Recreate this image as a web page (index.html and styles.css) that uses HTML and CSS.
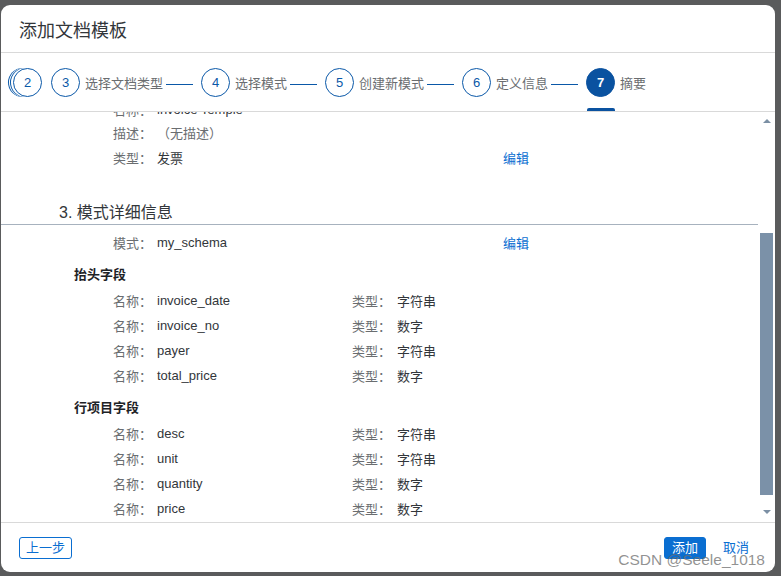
FILE: index.html
```html
<!DOCTYPE html>
<html lang="zh">
<head>
<meta charset="utf-8">
<title>添加文档模板</title>
<link rel="stylesheet" href="styles.css">
</head>
<body>
<div class="dialog">
  <header class="dlg-header">添加文档模板</header>

  <nav class="stepper">
    <div class="step"><span class="circle stacked">2</span></div>
    <div class="step"><span class="circle">3</span><span class="step-label">选择文档类型</span></div>
    <span class="connector"></span>
    <div class="step"><span class="circle">4</span><span class="step-label">选择模式</span></div>
    <span class="connector"></span>
    <div class="step"><span class="circle">5</span><span class="step-label">创建新模式</span></div>
    <span class="connector"></span>
    <div class="step"><span class="circle">6</span><span class="step-label">定义信息</span></div>
    <span class="connector"></span>
    <div class="step current"><span class="circle filled">7</span><span class="step-label">摘要</span></div>
  </nav>

  <div class="body">
    <div class="main">
      <div class="scroll-inner">
        <div class="attr-row top"><span class="lbl">名称：</span><span class="val">invoice Temple</span></div>
        <div class="attr-row"><span class="lbl">描述：</span><span class="val muted">（无描述）</span></div>
        <div class="attr-row"><span class="lbl">类型：</span><span class="val">发票</span><a class="edit">编辑</a></div>

        <h2 class="section-title">3. 模式详细信息</h2>

        <div class="attr-row first"><span class="lbl">模式：</span><span class="val">my_schema</span><a class="edit">编辑</a></div>

        <h3 class="sub-title">抬头字段</h3>
        <div class="field-list">
          <div class="field-row"><span class="lbl">名称：</span><span class="val">invoice_date</span><span class="lbl">类型：</span><span class="val">字符串</span></div>
          <div class="field-row"><span class="lbl">名称：</span><span class="val">invoice_no</span><span class="lbl">类型：</span><span class="val">数字</span></div>
          <div class="field-row"><span class="lbl">名称：</span><span class="val">payer</span><span class="lbl">类型：</span><span class="val">字符串</span></div>
          <div class="field-row"><span class="lbl">名称：</span><span class="val">total_price</span><span class="lbl">类型：</span><span class="val">数字</span></div>
        </div>

        <h3 class="sub-title">行项目字段</h3>
        <div class="field-list">
          <div class="field-row"><span class="lbl">名称：</span><span class="val">desc</span><span class="lbl">类型：</span><span class="val">字符串</span></div>
          <div class="field-row"><span class="lbl">名称：</span><span class="val">unit</span><span class="lbl">类型：</span><span class="val">字符串</span></div>
          <div class="field-row"><span class="lbl">名称：</span><span class="val">quantity</span><span class="lbl">类型：</span><span class="val">数字</span></div>
          <div class="field-row"><span class="lbl">名称：</span><span class="val">price</span><span class="lbl">类型：</span><span class="val">数字</span></div>
        </div>
      </div>
    </div>
    <div class="scrollbar">
      <span class="arrow up"></span>
      <span class="thumb"></span>
      <span class="arrow down"></span>
    </div>
  </div>

  <footer class="dlg-footer">
    <button class="btn btn-outline">上一步</button>
    <div class="footer-right">
      <button class="btn btn-primary">添加</button>
      <button class="btn btn-ghost">取消</button>
    </div>
    <span class="watermark">CSDN @Seele_1018</span>
  </footer>
</div>
</body>
</html>
```

FILE: styles.css
```css
* { box-sizing: border-box; }

html, body {
  margin: 0;
  padding: 0;
}

body {
  width: 781px;
  height: 576px;
  background: #5a5b5c;
  font-family: "Liberation Sans", "Noto Sans CJK SC", sans-serif;
  font-size: 13px;
  color: #32363a;
  overflow: hidden;
}

.dialog {
  position: relative;
  margin: 5px 0 0 1px;
  width: 774px;
  height: 567px;
  background: #fff;
  border-radius: 9px;
  display: flex;
  flex-direction: column;
  overflow: hidden;
}

.dlg-header {
  height: 48px;
  flex: none;
  padding: 0 18px;
  display: flex;
  align-items: center;
  font-size: 18px;
  color: #32363a;
  border-bottom: 1px solid #d9d9d9;
}

/* ---------- stepper ---------- */
.stepper {
  height: 59px;
  flex: none;
  display: flex;
  align-items: stretch;
  padding-left: 12px;
  border-bottom: 1px solid #d9d9d9;
}

.step {
  position: relative;
  display: flex;
  align-items: center;
  gap: 5px;
}

.step + .step { margin-left: 9px; }

.circle {
  width: 29px;
  height: 29px;
  border-radius: 50%;
  border: 1px solid #0a58a8;
  background: #fff;
  color: #0a58a8;
  display: flex;
  align-items: center;
  justify-content: center;
  font-size: 13px;
  margin-top: 1px;
}

.circle.stacked {
  box-shadow: -2px 0 0 #fff, -3px 0 0 #0a58a8, -4px 0 0 #fff, -5px 0 0 #0a58a8;
}

.circle.filled {
  background: #0a52a0;
  border-color: #0a52a0;
  color: #fff;
  font-weight: bold;
}

.step-label {
  color: #6a6d70;
  font-size: 13px;
  margin-top: 1px;
  white-space: nowrap;
}

.connector {
  align-self: center;
  width: 27px;
  height: 1px;
  background: #0a58a8;
  margin: 4px 8px 0 3px;
}

.step.current::after {
  content: "";
  position: absolute;
  left: 1px;
  bottom: 0;
  width: 28px;
  height: 3px;
  background: #0a52a0;
  border-radius: 2px 2px 0 0;
}

/* ---------- body ---------- */
.body {
  flex: 1;
  display: flex;
  min-height: 0;
}

.main {
  width: 758px;
  overflow: hidden;
}

.scroll-inner {
  margin-top: -14px;
}

.attr-row {
  display: grid;
  grid-template-columns: 44px 346px auto;
  align-items: center;
  height: 25px;
  padding-left: 112px;
}

.attr-row.top { height: 22px; }

.attr-row.first { margin-top: 5px; }

.field-list { margin-top: 3px; }

.field-row {
  display: grid;
  grid-template-columns: 44px 195px 45px auto;
  align-items: center;
  height: 25px;
  padding-left: 112px;
}

.lbl { color: #6a6d70; white-space: nowrap; }
.val { color: #32363a; white-space: nowrap; }
.muted { color: #6a6d70; }

.edit {
  color: #0a6ed1;
  cursor: pointer;
}

.section-title {
  margin: 28px 0 0;
  height: 27px;
  padding: 0 0 0 58px;
  display: flex;
  align-items: center;
  font-size: 16px;
  font-weight: normal;
  color: #32363a;
  border-bottom: 1px solid #a7b2be;
}

.sub-title {
  margin: 6px 0 0;
  height: 24px;
  padding-left: 73px;
  display: flex;
  align-items: center;
  font-size: 13px;
  font-weight: bold;
  color: #1d2226;
}

/* ---------- scrollbar ---------- */
.scrollbar {
  width: 13px;
  margin: 0 2px 0 2px;
  display: flex;
  flex-direction: column;
  align-items: center;
}

.arrow {
  width: 0;
  height: 0;
  border-left: 4px solid transparent;
  border-right: 4px solid transparent;
}

.arrow.up {
  margin-top: 7px;
  border-bottom: 4px solid #7b8fa4;
}

.arrow.down {
  margin-top: 15px;
  border-top: 4px solid #7b8fa4;
}

.thumb {
  width: 13px;
  height: 262px;
  margin-top: 110px;
  background: #7b91a8;
}

/* ---------- footer ---------- */
.dlg-footer {
  height: 50px;
  flex: none;
  border-top: 1px solid #d9d9d9;
  display: flex;
  align-items: center;
  justify-content: space-between;
  padding: 0 18px;
}

.footer-right {
  display: flex;
  align-items: center;
  gap: 9px;
}

.btn {
  font-family: "Liberation Sans", "Noto Sans CJK SC", sans-serif;
  font-size: 13px;
  height: 22px;
  padding: 0 7px;
  border-radius: 3px;
  border: 1px solid transparent;
  background: transparent;
  line-height: 20px;
  white-space: nowrap;
  cursor: pointer;
}

.btn-outline {
  border-color: #0a6ed1;
  color: #0a6ed1;
  background: #fff;
  padding: 0 6px;
}

.btn-primary {
  background: #0a6ed1;
  border-color: #0a6ed1;
  color: #fff;
}

.btn-ghost {
  color: #0a6ed1;
}

.watermark {
  position: absolute;
  right: 10px;
  bottom: 3px;
  font-family: "Liberation Sans", sans-serif;
  font-size: 15.5px;
  color: rgba(110, 110, 110, 0.75);
  pointer-events: none;
}
```
